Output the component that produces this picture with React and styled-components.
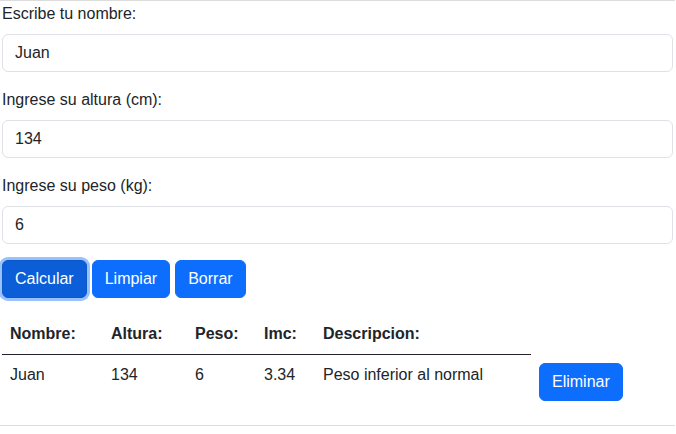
import React, { useState } from 'react';
import styled, { createGlobalStyle } from 'styled-components';

const GlobalStyle = createGlobalStyle`
  body {
    margin: 0;
    background: #fff;
    color: #212529;
    font-family: "Segoe UI", "Liberation Sans", Arial, sans-serif;
    font-size: 16px;
    line-height: 1.5;
  }
  * { box-sizing: border-box; }
`;

const Page = styled.div`
  padding: 0 3px 0 2px;
`;

const Rule = styled.hr`
  margin: ${props => props.$top || 0}px -2px 0 -2px;
  border: 0;
  border-top: 1px solid #dcdcdc;
  height: 0;
`;

const Form = styled.form`
  display: flex;
  flex-direction: column;
  gap: 16px;
  padding-top: 1px;
`;

const Field = styled.div`
  display: flex;
  flex-direction: column;
`;

const Label = styled.label`
  margin: 0 0 8px;
  line-height: 24px;
`;

const TextField = styled.input`
  height: 38px;
  padding: 6px 12px;
  border: 1px solid #dee2e6;
  border-radius: 6px;
  font: inherit;
  color: #212529;
  background: #fff;
  outline: none;
`;

const Actions = styled.div`
  display: flex;
  gap: 5px;
`;

const Button = styled.button`
  height: 38px;
  padding: 6px 12px;
  border: 1px solid ${props => (props.$active ? '#0a58ca' : '#0d6efd')};
  border-radius: 6px;
  background: ${props => (props.$active ? '#0b5ed7' : '#0d6efd')};
  color: #fff;
  font: inherit;
  line-height: 24px;
  box-shadow: ${props => (props.$active ? '0 0 0 3px rgba(49, 132, 253, 0.5)' : 'none')};
  cursor: pointer;
`;

const Table = styled.table`
  border-collapse: collapse;
  margin-top: 16px;
`;

const Head = styled.th`
  padding: 8px;
  text-align: left;
  font-weight: 700;
  border-bottom: 1px solid #212529;
  width: ${props => props.$w}px;
`;

const Cell = styled.td`
  padding: 8px;
  vertical-align: top;
  width: ${props => props.$w}px;
`;

const widths = [101, 84, 69, 59, 216];

const App = () => {
  const [nombre, setNombre] = useState('Juan');
  const [altura, setAltura] = useState('134');
  const [peso, setPeso] = useState('6');

  return (
    <>
      <GlobalStyle />
      <Page>
        <Rule />
        <Form onSubmit={e => e.preventDefault()}>
          <Field>
            <Label htmlFor="nombre">Escribe tu nombre:</Label>
            <TextField id="nombre" value={nombre} onChange={e => setNombre(e.target.value)} />
          </Field>
          <Field>
            <Label htmlFor="altura">Ingrese su altura (cm):</Label>
            <TextField id="altura" value={altura} onChange={e => setAltura(e.target.value)} />
          </Field>
          <Field>
            <Label htmlFor="peso">Ingrese su peso (kg):</Label>
            <TextField id="peso" value={peso} onChange={e => setPeso(e.target.value)} />
          </Field>
          <Actions>
            <Button $active type="submit">Calcular</Button>
            <Button type="button">Limpiar</Button>
            <Button type="button">Borrar</Button>
          </Actions>
        </Form>
        <Table>
          <thead>
            <tr>
              <Head $w={widths[0]}>Nombre:</Head>
              <Head $w={widths[1]}>Altura:</Head>
              <Head $w={widths[2]}>Peso:</Head>
              <Head $w={widths[3]}>Imc:</Head>
              <Head $w={widths[4]}>Descripcion:</Head>
            </tr>
          </thead>
          <tbody>
            <tr>
              <Cell>Juan</Cell>
              <Cell>134</Cell>
              <Cell>6</Cell>
              <Cell>3.34</Cell>
              <Cell>Peso inferior al normal</Cell>
              <Cell>
                <Button type="button">Eliminar</Button>
              </Cell>
            </tr>
          </tbody>
        </Table>
        <Rule $top={16} />
      </Page>
    </>
  );
};

export default App;
